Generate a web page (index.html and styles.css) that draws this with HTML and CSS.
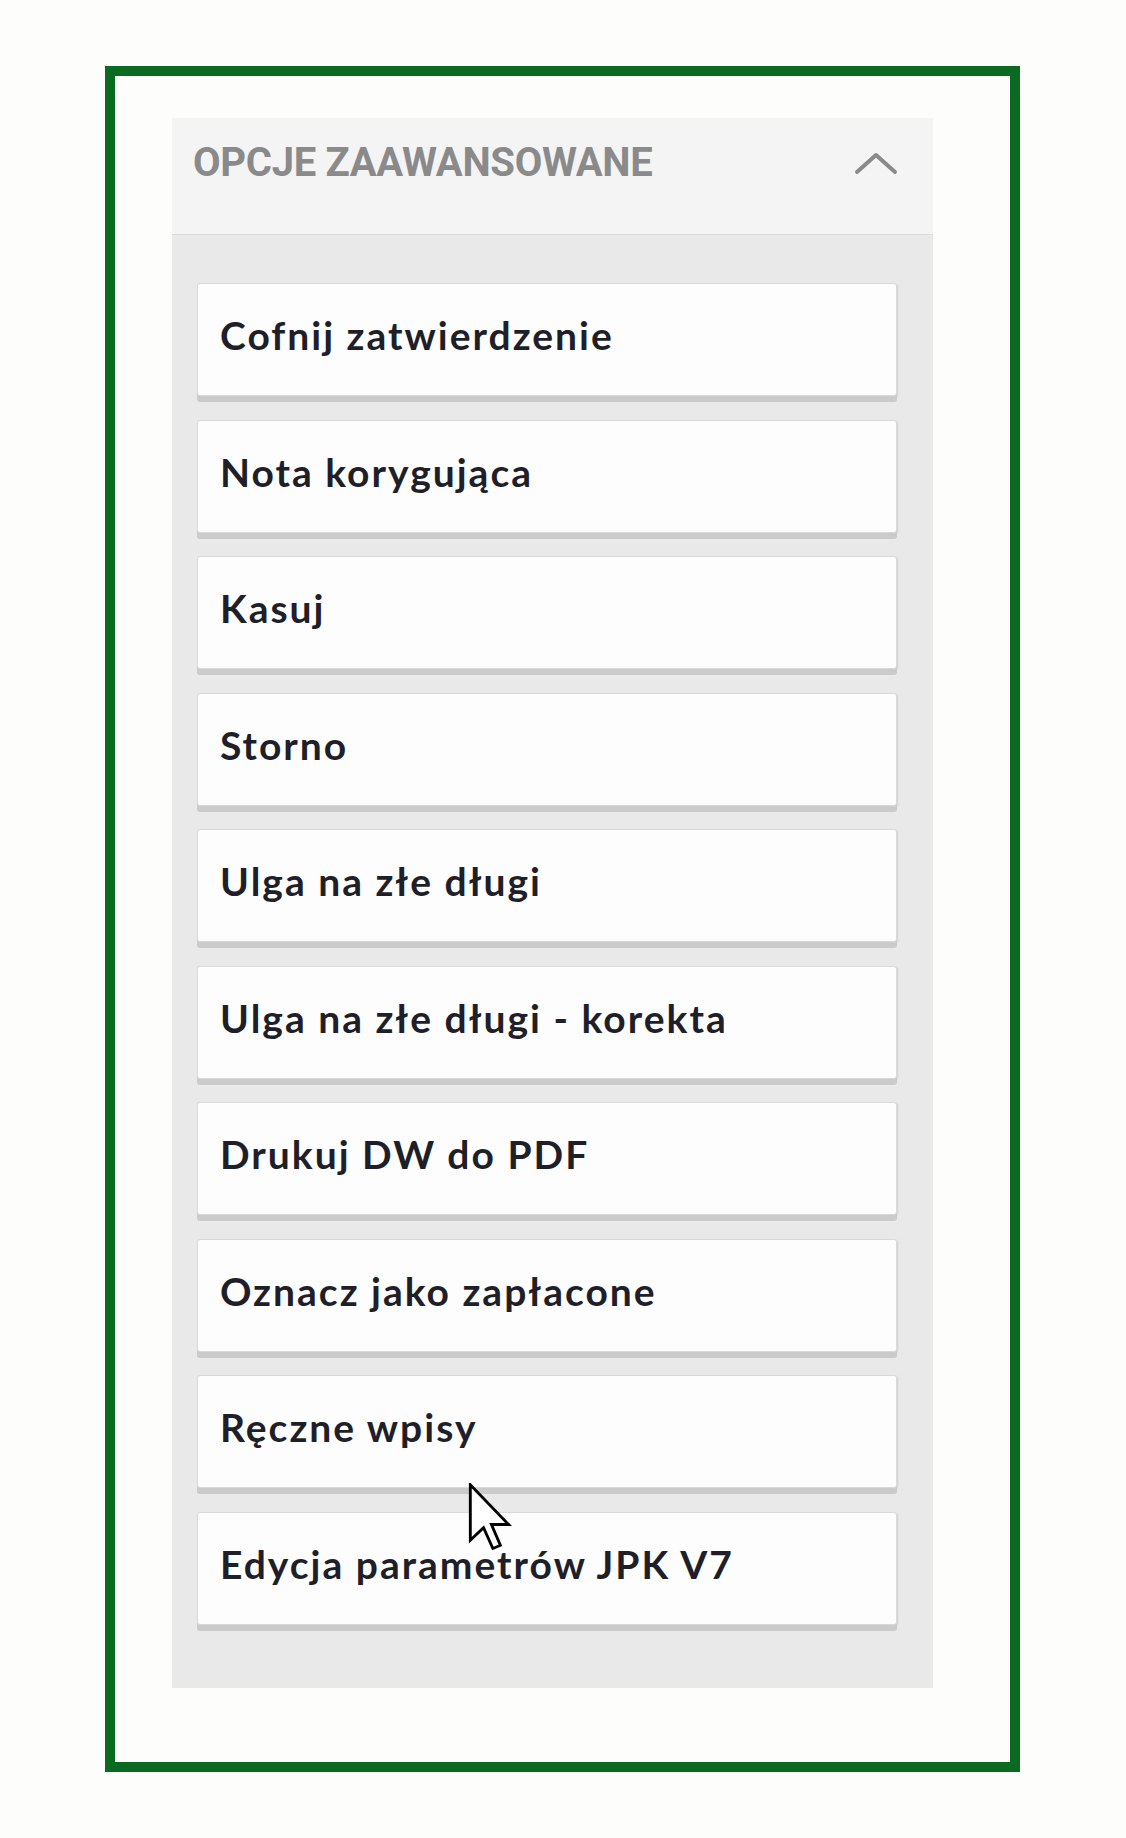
FILE: index.html
```html
<!DOCTYPE html>
<html lang="pl">
<head>
<meta charset="utf-8">
<title>Opcje zaawansowane</title>
<link rel="stylesheet" href="styles.css">
</head>
<body>
<div class="frame">
  <section class="panel">
    <header class="panel-head">
      <span class="panel-title">OPCJE ZAAWANSOWANE</span>
      <svg class="chevron" width="44" height="26" viewBox="0 0 44 26" aria-hidden="true">
        <polyline points="3,22 22,5 41,22" fill="none" stroke="#8a8a8a" stroke-width="4" stroke-linecap="round" stroke-linejoin="round"/>
      </svg>
    </header>
    <div class="panel-body">
      <div class="item">Cofnij zatwierdzenie</div>
      <div class="item">Nota korygująca</div>
      <div class="item">Kasuj</div>
      <div class="item">Storno</div>
      <div class="item">Ulga na złe długi</div>
      <div class="item">Ulga na złe długi - korekta</div>
      <div class="item">Drukuj DW do PDF</div>
      <div class="item">Oznacz jako zapłacone</div>
      <div class="item">Ręczne wpisy</div>
      <div class="item">Edycja parametrów JPK V7</div>
    </div>
  </section>
  <svg class="cursor" width="44" height="68" viewBox="0 0 12 19" aria-hidden="true">
    <path d="M0.5,0.5 L0.5,16 L4.2,12.5 L6.8,18.3 L8.9,17.4 L6.4,11.6 L11.2,11.6 Z" fill="#ffffff" stroke="#000000" stroke-width="0.8" stroke-linejoin="miter"/>
  </svg>
</div>
</body>
</html>
```
FILE: styles.css
```css
html, body {
  margin: 0;
  padding: 0;
  background: #fdfdfb;
}
body {
  width: 1126px;
  height: 1838px;
  font-family: Lato, "Open Sans", sans-serif;
}
.frame {
  position: relative;
  margin: 66px 0 0 105px;
  border: 10px solid #0b6a22;
  padding: 42px 77px 74px 57px;
  box-sizing: content-box;
  width: 761px;
  height: 1570px;
}
.panel {
  width: 761px;
  height: 1570px;
  background: #e9e9e9;
  display: flex;
  flex-direction: column;
}
.panel-head {
  height: 117px;
  box-sizing: border-box;
  background: #f4f4f4;
  border-bottom: 1px solid #dcdcdc;
  display: flex;
  align-items: flex-start;
  justify-content: space-between;
  padding: 21px 35px 0 21px;
}
.panel-title {
  font-family: Roboto, Lato, sans-serif;
  font-weight: 700;
  font-size: 40px;
  line-height: 48px;
  color: #8a8a8a;
  letter-spacing: -0.3px;
}
.chevron {
  margin-top: 11px;
}
.panel-body {
  display: flex;
  flex-direction: column;
  gap: 23.5px;
  padding: 48px 36px 0 25px;
}
.item {
  height: 113px;
  box-sizing: border-box;
  background: #fdfdfd;
  border: 1px solid #d9d9d9;
  border-radius: 3px;
  box-shadow: 0 6px 0 #cbcbcb, 1px 1px 2px #d0d0d0;
  padding: 27px 0 0 22px;
  font-weight: 700;
  font-size: 39px;
  line-height: 48px;
  letter-spacing: 2px;
  color: #1f1f29;
  white-space: nowrap;
}
.cursor {
  position: absolute;
  left: 353px;
  top: 1407px;
}
```
